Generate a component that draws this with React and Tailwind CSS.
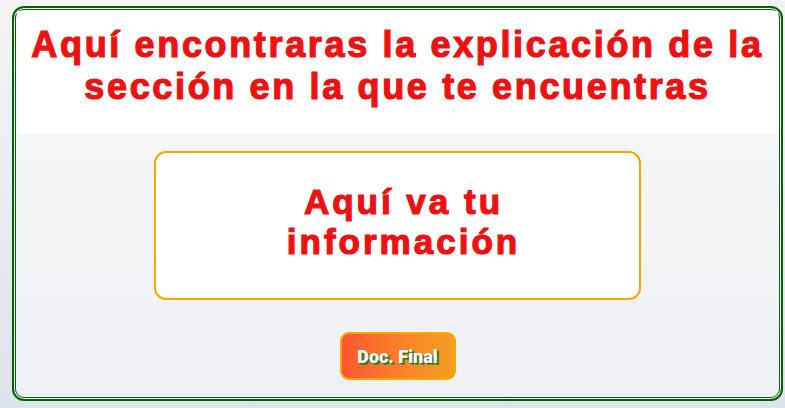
export default function App() {
  return (
    <div className="w-[785px] h-[408px] overflow-hidden bg-gradient-to-b from-[#f4f4f4] to-[#dde3ea] pt-[6px] pl-[12px]">
      <div className="w-[771px] h-[395px] rounded-[12px] border-2 border-[#006400] shadow-[inset_0_0_0_1px_#ffffff,inset_0_0_0_2px_#006400] overflow-hidden flex flex-col bg-gradient-to-b from-[#f8f8f8] to-[#eef1f4] font-['Liberation_Sans',Arial,sans-serif]">
        <div className="h-[123px] shrink-0 bg-white flex flex-col items-center pt-[13px] mx-[3px] mt-[3px]">
          <h1 className="text-[#ee1111] font-bold text-[36px] leading-[42px] tracking-[2.65px] text-center [-webkit-text-stroke:1.2px_#ee1111] whitespace-nowrap">
            Aquí encontraras la explicación de la
            <br />
            sección en la que te encuentras
          </h1>
        </div>
        <div className="flex flex-col items-center pt-[17px]">
          <div className="w-[487px] h-[149px] bg-white border-2 border-[#ffa500] rounded-[12px] flex items-center justify-center pl-[12px] pb-[8px]">
            <p className="text-[#ee1111] font-bold text-[35px] leading-[40px] tracking-[3px] text-center [-webkit-text-stroke:1.2px_#ee1111]">
              Aquí va tu
              <br />
              información
            </p>
          </div>
          <button className="mt-[32px] w-[116px] h-[48px] rounded-[9px] border-2 border-[#ffa500] bg-gradient-to-r from-[#ff5530] to-[#f0a020] text-white font-black text-[18px] font-['Roboto',sans-serif] [text-shadow:1px_1px_0_#2e6b1a,2px_2px_0_#4a8a2a]">
            Doc. Final
          </button>
        </div>
      </div>
    </div>
  );
}
